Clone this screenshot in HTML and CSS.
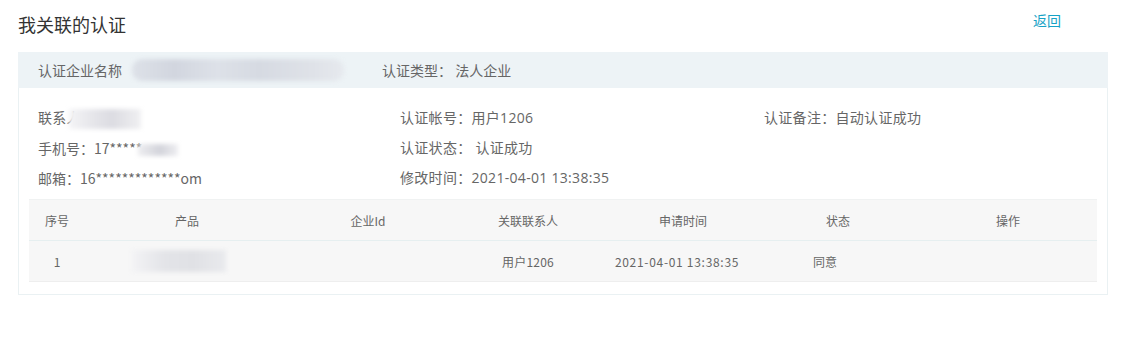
FILE: index.html
```html
<!DOCTYPE html>
<html lang="zh">
<head>
<meta charset="utf-8">
<link rel="stylesheet" href="styles.css">
</head>
<body>
<div class="page">
  <div class="topbar">
    <h1 class="title">我关联的认证</h1>
    <a class="back" href="#">返回</a>
  </div>
  <div class="card">
    <div class="card-head">
      <span class="label">认证企业名称</span>
      <span class="blur blur-name"></span>
      <span class="label type">认证类型： 法人企业</span>
    </div>
    <div class="card-body">
      <div class="info">
        <div class="cell">联系人<span class="blur blur-contact"></span></div>
        <div class="cell">认证帐号：用户1206</div>
        <div class="cell">认证备注：自动认证成功</div>
        <div class="cell cjk">手机号：17*****<span class="blur blur-phone"></span></div>
        <div class="cell">认证状态： 认证成功</div>
        <div class="cell"></div>
        <div class="cell cjk">邮箱：16*************om</div>
        <div class="cell">修改时间：2021-04-01 13:38:35</div>
        <div class="cell"></div>
      </div>
      <table class="grid">
        <thead>
          <tr>
            <th class="c1">序号</th>
            <th class="c2">产品</th>
            <th class="c3">企业Id</th>
            <th class="c4">关联联系人</th>
            <th class="c5">申请时间</th>
            <th class="c6">状态</th>
            <th class="c7">操作</th>
          </tr>
        </thead>
        <tbody>
          <tr>
            <td>1</td>
            <td><span class="blur blur-product"></span></td>
            <td></td>
            <td class="num">用户1206</td>
            <td class="num date">2021-04-01 13:38:35</td>
            <td class="state">同意</td>
            <td></td>
          </tr>
        </tbody>
      </table>
    </div>
  </div>
</div>
</body>
</html>
```
FILE: styles.css
```css
* { box-sizing: border-box; }
body {
  margin: 0;
  background: #fff;
  font-family: "Noto Sans CJK SC", "Liberation Sans", sans-serif;
  color: #666;
}
.page { padding: 0 18px; }
.topbar {
  display: flex;
  justify-content: space-between;
  align-items: flex-start;
  height: 52px;
}
.title {
  margin: 11px 0 0 0;
  font-size: 18px;
  font-weight: normal;
  color: #333;
  line-height: 26px;
}
.back {
  margin: 10px 47px 0 0;
  font-size: 14px;
  color: #17a2c6;
  text-decoration: none;
  line-height: 20px;
}
.card {
  width: 1090px;
  border: 1px solid #eaf1f3;
  border-top: none;
}
.card-head {
  height: 36px;
  background: #edf3f6;
  display: flex;
  align-items: center;
  font-size: 14px;
  color: #666;
  margin: 0 -1px;
  padding-left: 20px;
}
.blur {
  display: inline-block;
  filter: blur(2px);
  vertical-align: middle;
}
.blur-name {
  width: 212px;
  height: 22px;
  margin-left: 10px;
  border-radius: 10px;
  background: linear-gradient(90deg, #dde1e8 0%, #d2d6df 20%, #dde1e8 40%, #d6dae2 60%, #dfe2e8 85%, #e6e9ee 100%);
}
.type { margin-left: 38px; }
.card-body { padding: 15px 10px 12px 10px; }
.info {
  display: grid;
  grid-template-columns: 362px 364px 1fr;
  grid-auto-rows: 30px;
  padding-left: 9px;
  font-family: "Open Sans", "Noto Sans CJK SC", sans-serif;
  font-size: 14px;
  letter-spacing: 0.3px;
  line-height: 30px;
  color: #666;
}
.cell { white-space: nowrap; }
.cell.cjk {
  font-family: "Noto Sans CJK SC", sans-serif;
  letter-spacing: 0;
}
.blur-contact {
  width: 72px;
  height: 20px;
  background: linear-gradient(90deg, #f4f4f6 0%, #e3e3e8 40%, #dcdce2 60%, #f0f0f2 100%);
  margin-left: -12px;
}
.blur-phone {
  width: 40px;
  height: 12px;
  margin-left: -4px;
  background: linear-gradient(90deg, #ededf0 0%, #d3d4db 55%, #eeeef1 100%);
}
.grid {
  width: 1068px;
  margin-top: 6px;
  border-collapse: collapse;
  font-size: 12px;
  color: #666;
  table-layout: fixed;
}
.grid th, .grid td {
  text-align: center;
  font-weight: normal;
  height: 41px;
  padding: 0;
  background: #f7f7f7;
}
.grid thead th { border-top: 1px solid #f0f2f2; border-bottom: 1px solid #e6eff0; }
.grid tbody td { border-bottom: 1px solid #eeeeee; }
.grid td.num { letter-spacing: 0.2px; }
.grid td.date { letter-spacing: 0.7px; padding-right: 12px; }
.grid td.state { padding-right: 26px; }
.c1 { width: 56px; }
.c2 { width: 204px; }
.c3 { width: 158px; }
.c4 { width: 162px; }
.c5 { width: 148px; }
.c6 { width: 162px; }
.c7 { width: 178px; }
.blur-product {
  width: 94px;
  height: 22px;
  margin-left: -16px;
  background: linear-gradient(90deg, #f3f3f5 0%, #e3e4e8 35%, #e0e1e5 65%, #e9eaed 100%);
}
```
